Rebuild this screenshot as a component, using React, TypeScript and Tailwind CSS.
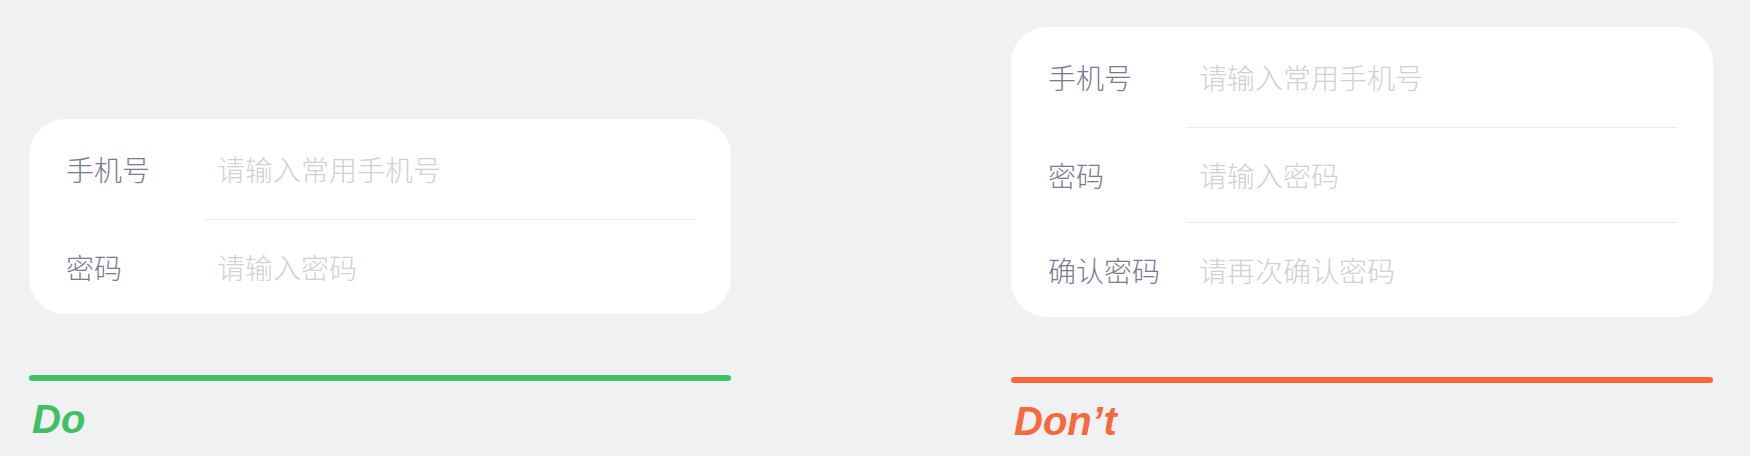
const cjk = '"Noto Sans CJK SC", "Noto Sans", sans-serif';

type Field = { label: string; placeholder: string };

const shortForm: Field[] = [
  { label: '手机号', placeholder: '请输入常用手机号' },
  { label: '密码', placeholder: '请输入密码' },
];

const longForm: Field[] = [
  { label: '手机号', placeholder: '请输入常用手机号' },
  { label: '密码', placeholder: '请输入密码' },
  { label: '确认密码', placeholder: '请再次确认密码' },
];

function FormCard({ fields }: { fields: Field[] }) {
  return (
    <div className="w-full rounded-[36px] bg-white">
      {fields.map((f, i) => (
        <div key={f.label}>
          {i > 0 && (
            <div className="ml-[175px] mr-[36px] h-px bg-[#ebebee]" />
          )}
          <div
            className={`flex items-center pl-[37px] ${i === 0 ? 'h-[100px]' : 'h-[94px]'}`}
          >
            <span
              className="w-[151px] shrink-0 text-[28px] font-light leading-none text-[#7a7990]"
              style={{ fontFamily: cjk }}
            >
              {f.label}
            </span>
            <input
              placeholder={f.placeholder}
              className="flex-1 bg-transparent text-[28px] font-light leading-none text-[#333] outline-none placeholder:text-[#d0d0d4]"
              style={{ fontFamily: cjk }}
            />
          </div>
        </div>
      ))}
    </div>
  );
}

function Verdict({ ok }: { ok: boolean }) {
  return (
    <div className="mt-auto">
      <div
        className={`h-[6px] w-full rounded-full ${ok ? 'bg-[#3ec063]' : 'bg-[#f7693a]'}`}
      />
      <div
        className={`mt-[14px] pl-[3px] text-[40px] font-bold italic leading-[48px] ${ok ? 'text-[#3ec063]' : 'text-[#f7693a]'}`}
        style={{ fontFamily: '"Liberation Sans", Arial, sans-serif' }}
      >
        {ok ? 'Do' : 'Don’t'}
      </div>
    </div>
  );
}

export default function App() {
  return (
    <div className="flex h-[456px] w-[1750px] gap-[280px] bg-[#f0f1f3] pl-[29px]">
      <div className="flex w-[702px] flex-col pb-[13px] pt-[119px]">
        <FormCard fields={shortForm} />
        <Verdict ok />
      </div>
      <div className="flex w-[702px] flex-col pb-[11px] pt-[27px]">
        <FormCard fields={longForm} />
        <Verdict ok={false} />
      </div>
    </div>
  );
}
